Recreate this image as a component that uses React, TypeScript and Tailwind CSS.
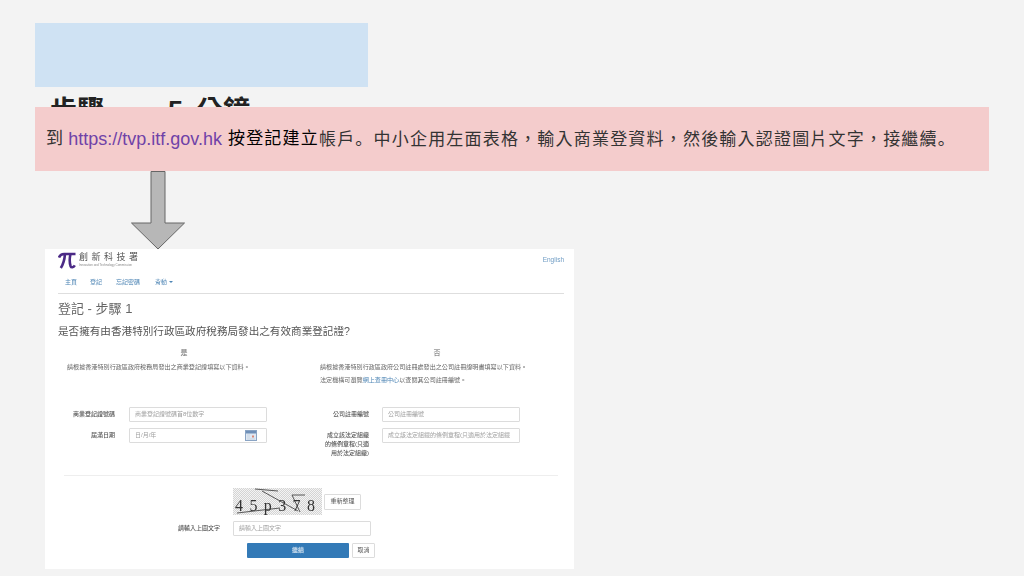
const CJK = "font-['Liberation_Sans','Noto_Sans_CJK_TC',sans-serif]"

const inputClass =
  'h-[15px] flex items-center bg-white border border-[#dcdcdc] rounded-[1px] px-[5px] text-[6px] text-[#a0a0a0] whitespace-nowrap overflow-hidden'

const NAV = [
  { label: '主頁', width: 'w-[25px]' },
  { label: '登記', width: 'w-[26px]' },
  { label: '忘記密碼', width: 'w-[39px]' },
]

const Logo = () => (
  <svg width="18" height="17" viewBox="0 0 18 17" fill="none" className="shrink-0">
    <path
      d="M1 5.5C2 2.8 3.5 2 6 2H17.5M7 2.2C6.6 7 5.5 12 2.8 16M12.4 2.2C11.4 7 11.5 11 12.6 14.2C13.2 15.8 15.4 15.8 16.8 13.4"
      stroke="#4b2a86"
      strokeWidth="2.6"
    />
  </svg>
)

const Calendar = () => (
  <svg width="12" height="11" viewBox="0 0 12 11" className="shrink-0">
    <rect x="0.5" y="0.5" width="11" height="10" fill="#dfe8f3" stroke="#8aa4c4" />
    <rect x="1" y="1" width="10" height="2.5" fill="#6f8fb8" />
    <rect x="7" y="5.5" width="2" height="2" fill="#d98a7a" />
    <path d="M2 5h3M2 7h3M2 9h8" stroke="#b8c6d8" strokeWidth="0.6" />
  </svg>
)

const Captcha = () => (
  <svg width="89" height="27" viewBox="0 0 89 27" className="shrink-0">
    <defs>
      <pattern id="dots" width="2" height="2" patternUnits="userSpaceOnUse">
        <rect width="2" height="2" fill="#f4f4f4" />
        <rect width="1" height="1" fill="#d4d4d4" />
        <rect x="1" y="1" width="1" height="1" fill="#d4d4d4" />
      </pattern>
    </defs>
    <rect width="89" height="27" fill="url(#dots)" />
    <text x="2" y="23" fontSize="16" fill="#333" fontFamily="Liberation Serif, serif" textLength="80">
      45p378
    </text>
    <path
      d="M22 1L45 3M29 3L65 23M4 25L47 20M59 7L72 7M59 7L67 24"
      stroke="#333"
      strokeWidth="0.8"
      fill="none"
    />
  </svg>
)

const SiteScreenshot = () => (
  <div className={`ml-[10px] w-[529px] h-[320px] bg-white pl-[13px] pr-[10px] text-[#555] blur-[0.4px] ${CJK}`}>
    <div className="flex justify-between pt-[3px] h-[25px]">
      <div className="flex gap-[3px]">
        <Logo />
        <div>
          <div className="text-[9px] leading-[11px] tracking-[3.5px] text-[#555] whitespace-nowrap">創新科技署</div>
          <div className="text-[3px] leading-[4px] text-[#888] whitespace-nowrap">Innovation and Technology Commission</div>
        </div>
      </div>
      <div className="text-[6.5px] text-[#6f9cc4] pt-[3px]">English</div>
    </div>
    <div className="flex items-center h-[16px] pl-[7px] text-[6px] text-[#4f86b5]">
      {NAV.map((item) => (
        <span key={item.label} className={item.width}>
          {item.label}
        </span>
      ))}
      <span className="flex items-center gap-[2px]">
        背動
        <span className="w-0 h-0 border-x-[2px] border-x-transparent border-t-[2px] border-t-[#4f86b5]" />
      </span>
    </div>
    <div className="h-px bg-[#dedede] mt-[3px]" />
    <div className="text-[13px] leading-[16px] text-[#666] mt-[7px]">登記 - 步驟 1</div>
    <div className="text-[10.6px] leading-[14px] text-[#555] mt-[7px]">是否擁有由香港特別行政區政府稅務局發出之有效商業登記證?</div>

    <div className="grid grid-cols-2 mt-[10px]">
      <div className="h-[51px]">
        <div className="w-[252px] text-center text-[7px] leading-[9px] text-[#666]">是</div>
        <div className="pl-[9px] mt-[6px] text-[6.1px] leading-[7px] whitespace-nowrap text-[#666]">
          請根據香港特別行政區政府稅務局發出之商業登記證填寫以下資料。
        </div>
      </div>
      <div className="h-[51px]">
        <div className="w-[252px] text-center text-[7px] leading-[9px] text-[#666]">否</div>
        <div className="ml-[9px] mt-[6px] text-[6.1px] leading-[7px] whitespace-nowrap text-[#666]">
          請根據香港特別行政區政府公司註冊處發出之公司註冊證明書填寫以下資料。
        </div>
        <div className="ml-[9px] mt-[6px] text-[6.1px] leading-[7px] whitespace-nowrap text-[#666]">
          法定機構可瀏覽<span className="text-[#4f86b5]">網上查冊中心</span>以查閱其公司註冊編號。
        </div>
      </div>
    </div>

    <div className="flex mt-[8px] h-[69px]">
      <div className="w-[209px] grid grid-cols-[57px_138px] gap-x-[14px] gap-y-[6px] content-start">
        <div className="h-[15px] flex items-center justify-end text-[6px] font-medium whitespace-nowrap">商業登記證號碼</div>
        <div className={inputClass}>商業登記證號碼首8位數字</div>
        <div className="h-[15px] flex items-center justify-end text-[6px] font-medium">屆滿日期</div>
        <div className={`${inputClass} justify-between pr-[9px]`}>
          日/月/年
          <Calendar />
        </div>
      </div>
      <div className="ml-[52px] grid grid-cols-[50px_138px] gap-x-[13px] gap-y-[6px] content-start">
        <div className="h-[15px] flex items-center justify-end text-[6px] font-medium">公司註冊編號</div>
        <div className={inputClass}>公司註冊編號</div>
        <div className="text-right text-[6px] leading-[9px] font-medium pt-[3px] whitespace-nowrap">
          成立該法定組織
          <br />
          的條例章程(只適
          <br />
          用於法定組織)
        </div>
        <div className={inputClass}>成立該法定組織的條例章程(只適用於法定組織</div>
      </div>
    </div>

    <div className="h-px bg-[#eeeeee] mx-[6px] mt-[-1px]" />

    <div className="pl-[175px] mt-[12px]">
      <div className="flex items-center gap-[2px]">
        <Captcha />
        <div className="w-[37px] h-[16px] flex items-center justify-center border border-[#dcdcdc] rounded-[1px] text-[6px]">重新整理</div>
      </div>
      <div className="flex items-center mt-[6px] h-[15px]">
        <div className="w-[43px] -ml-[56px] mr-[13px] text-right text-[6px] font-medium whitespace-nowrap">請輸入上圖文字</div>
        <div className={`${inputClass} w-[138px]`}>請輸入上圖文字</div>
      </div>
      <div className="flex items-center gap-[3px] mt-[7px] ml-[14px]">
        <div className="w-[102px] h-[15px] flex items-center justify-center bg-[#337ab7] rounded-[1px] text-[6px] text-white">繼續</div>
        <div className="w-[23px] h-[15px] flex items-center justify-center border border-[#dcdcdc] rounded-[1px] text-[6px]">取消</div>
      </div>
    </div>
  </div>
)

// the source slide sets its full stops bottom-left, which the TC face does not
const FullStop = () => (
  <span lang="zh-CN" className="font-['Noto_Sans_CJK_SC',sans-serif]">
    。
  </span>
)

export default function App() {
  return (
    <div lang="zh-TW" className={`w-[1024px] h-[576px] overflow-hidden bg-[#f3f3f3] pt-[23px] pl-[35px] ${CJK}`}>
      <div className="w-[333px] h-[64px] bg-[#cfe2f3]" />
      <div className="h-[20px] overflow-hidden pl-[15px] pt-[8px] flex text-[27px] leading-[32px] font-bold text-[#222] whitespace-nowrap">
        <span className="w-[118px]">步驟</span>
        <span className="w-[28px]">5</span>
        <span>分鐘</span>
      </div>
      <div className="w-[954px] h-[64px] bg-[#f4cccc] flex items-center pl-[11px] text-[17px] tracking-[1.2px] text-[#333] whitespace-nowrap">
        <span className="mr-[4px]">到</span>
        <span className="text-[#6f42a8] text-[18px] tracking-normal mr-[6px]">https://tvp.itf.gov.hk</span>
        <span className="text-black">按登記建立</span>
        <span>
          帳戶<FullStop />中小企用左面表格，輸入商業登資料，然後輸入認證圖片文字，接繼續<FullStop />
        </span>
      </div>
      <svg width="56" height="79" viewBox="0 0 56 79" className="block ml-[95px] -mb-px relative z-10">
        <path d="M21 0.5H35V52H54.5L28 78L1.5 52H21Z" fill="#b7b7b7" stroke="#666" strokeWidth="1" />
      </svg>
      <SiteScreenshot />
    </div>
  )
}
